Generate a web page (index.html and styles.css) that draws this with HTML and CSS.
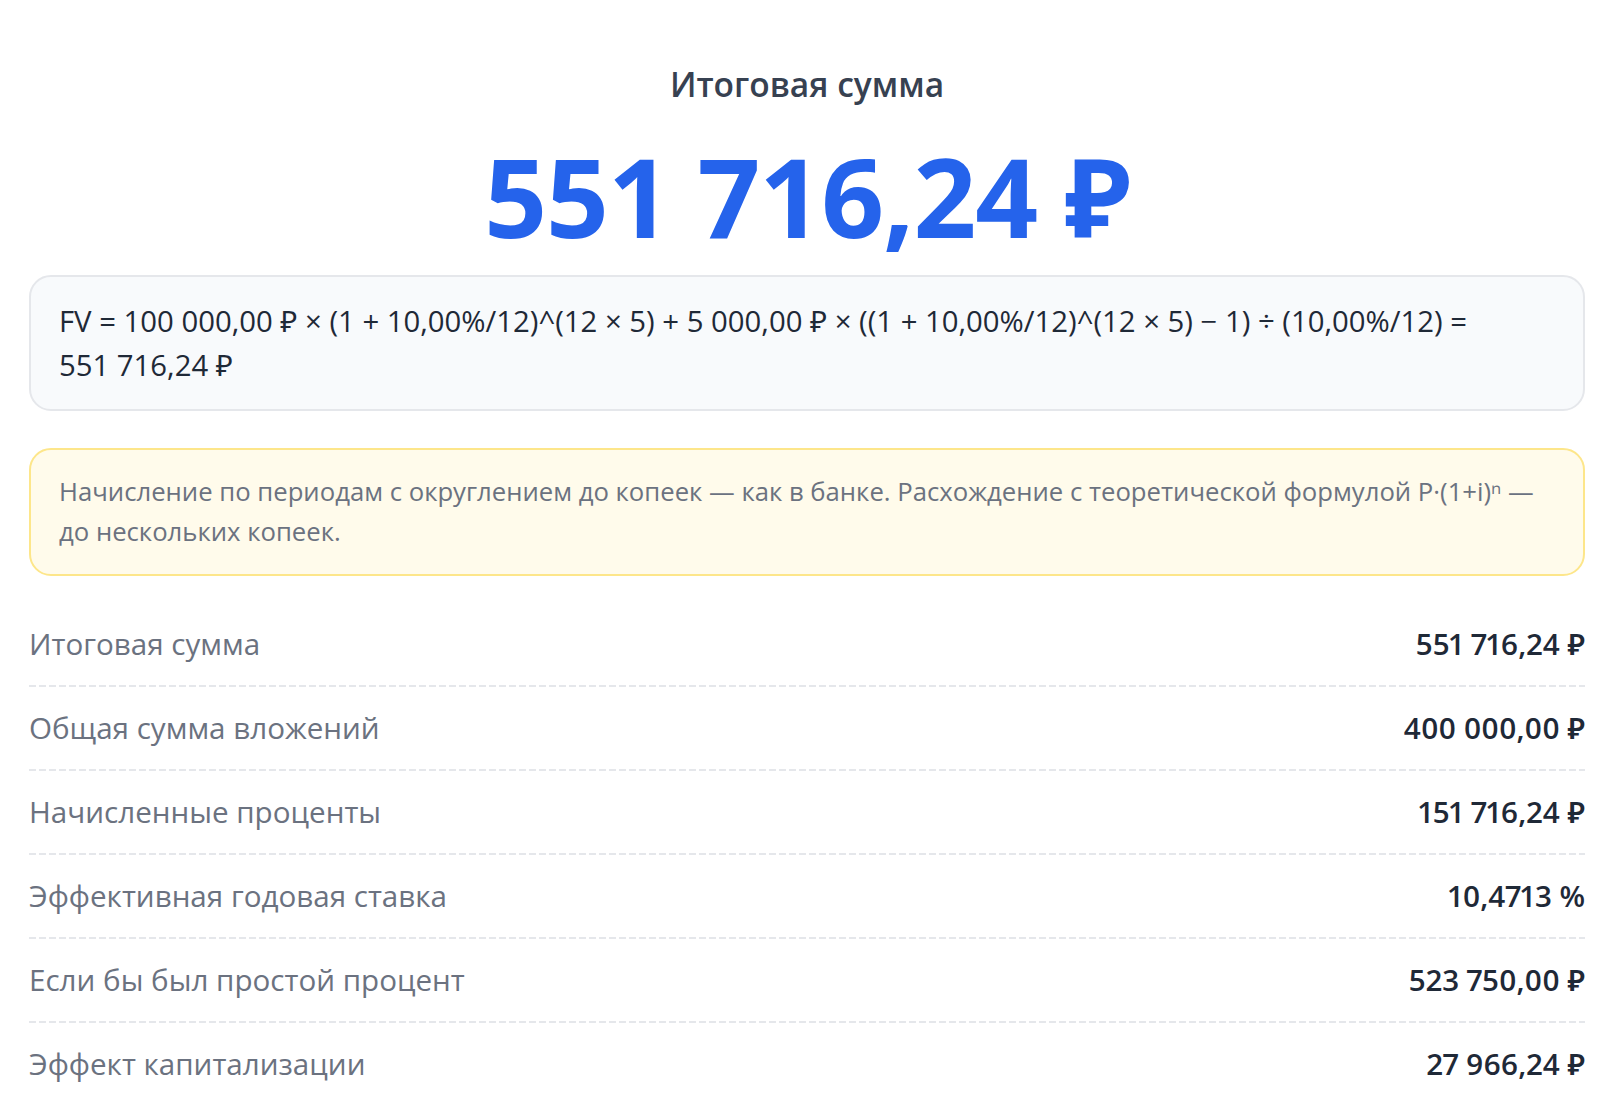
FILE: index.html
```html
<!DOCTYPE html>
<html lang="ru">
<head>
<meta charset="UTF-8">
<meta name="viewport" content="width=device-width, initial-scale=1.0">
<title>Итоговая сумма</title>
<link rel="stylesheet" href="styles.css">
</head>
<body>
  <div class="result">
    <div class="result-header">
      <div class="result-caption">Итоговая сумма</div>
      <div class="result-total">551&nbsp;716,24&nbsp;₽</div>
    </div>

    <div class="formula">
      FV = 100&nbsp;000,00&nbsp;₽ × (1 + 10,00%/12)^(12 × 5) + 5&nbsp;000,00&nbsp;₽ × ((1 + 10,00%/12)^(12 × 5) − 1) ÷ (10,00%/12) = 551&nbsp;716,24&nbsp;₽
    </div>

    <div class="note">
      Начисление по периодам с округлением до копеек — как в банке. Расхождение с теоретической формулой P·(1+i)ⁿ — до нескольких копеек.
    </div>

    <div class="summary">
      <div class="summary-row">
        <span class="summary-label">Итоговая сумма</span>
        <span class="summary-value">551&nbsp;716,24&nbsp;₽</span>
      </div>
      <div class="summary-row">
        <span class="summary-label">Общая сумма вложений</span>
        <span class="summary-value">400&nbsp;000,00&nbsp;₽</span>
      </div>
      <div class="summary-row">
        <span class="summary-label">Начисленные проценты</span>
        <span class="summary-value">151&nbsp;716,24&nbsp;₽</span>
      </div>
      <div class="summary-row">
        <span class="summary-label">Эффективная годовая ставка</span>
        <span class="summary-value">10,4713&nbsp;%</span>
      </div>
      <div class="summary-row">
        <span class="summary-label">Если бы был простой процент</span>
        <span class="summary-value">523&nbsp;750,00&nbsp;₽</span>
      </div>
      <div class="summary-row">
        <span class="summary-label">Эффект капитализации</span>
        <span class="summary-value">27&nbsp;966,24&nbsp;₽</span>
      </div>
    </div>
  </div>
</body>
</html>
```

FILE: styles.css
```css
body, html {
  margin: 0;
  padding: 0;
  background: #ffffff;
  font-family: "Open Sans", "Noto Sans", sans-serif;
}

.result {
  padding: 62px 22px 40px 29px;
}

.result-header {
  text-align: center;
}

.result-caption {
  font-size: 33.5px;
  font-weight: 600;
  color: #374151;
  line-height: 44px;
}

.result-total {
  margin-top: 27px;
  font-size: 110px;
  font-weight: 700;
  color: #2563eb;
  line-height: 124px;
  letter-spacing: -1px;
}

.formula {
  margin-top: 18px;
  padding: 22px 28px;
  background-color: #f8fafc;
  border: 2px solid #e5e7eb;
  border-radius: 22px;
  font-size: 29.3px;
  line-height: 44px;
  color: #1f2937;
}

.note {
  margin-top: 37px;
  padding: 22px 28px;
  background-color: #fffbeb;
  border: 2px solid #fde68a;
  border-radius: 22px;
  font-size: 25.7px;
  line-height: 40px;
  color: #6b7280;
}

.summary {
  margin-top: 27px;
}

.summary-row {
  display: flex;
  justify-content: space-between;
  align-items: center;
  padding: 21px 0 23px;
  line-height: 40px;
  background-image: repeating-linear-gradient(to right, #e5e7eb 0 7px, transparent 7px 10px);
  background-size: 100% 2px;
  background-position: left bottom;
  background-repeat: no-repeat;
}

.summary-row:last-child {
  background-image: none;
}

.summary-label {
  font-size: 29.6px;
  color: #6b7280;
}

.summary-value {
  font-size: 29.6px;
  font-weight: 600;
  color: #1f2937;
  font-variant-numeric: proportional-nums;
}
```
